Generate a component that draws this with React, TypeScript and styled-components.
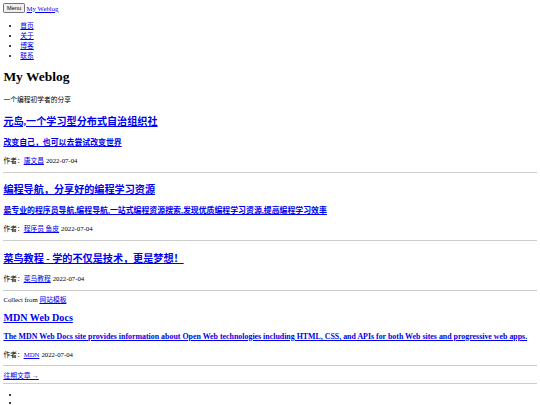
import React from 'react'
import styled, { createGlobalStyle } from 'styled-components'

// page was captured at 1280px wide and shrunk to 540, so every default size is scaled by 0.421875
const GlobalStyle = createGlobalStyle`
  html {
    background: #fff;
  }
  body {
    margin: 3.375px;
    font-family: "Liberation Serif", "Noto Sans CJK SC", serif;
    font-size: 6.75px;
    color: #000;
  }
`

const Link = styled.a`
  color: #0000ee;
  text-decoration: underline;
  text-underline-offset: 0.6px;
  text-decoration-thickness: 0.5px;
`

const TopBar = styled.div`
  display: flex;
  align-items: center;
  gap: 2px;
`

const MenuButton = styled.button`
  font-family: "Liberation Sans", Arial, sans-serif;
  font-size: 5.625px;
  padding: 0.8px 2.6px;
  margin: 0;
  border: 0.8px solid #767676;
  border-radius: 1.2px;
  background: #efefef;
  color: #000;
  line-height: 1.15;
`

const List = styled.ul`
  margin: 6.75px 0;
  padding-left: 16.875px;
`

const Item = styled.li`
  min-height: 7.8px;
`

const SiteTitle = styled.h1`
  font-size: 13.5px;
  margin: 9.05px 0;
`

const Para = styled.p`
  margin: 6.75px 0;
`

const Line = styled.div`
  margin: 0;
`

const PostTitle = styled.h2`
  font-size: 10.125px;
  margin: 8.4px 0;
`

const PostDesc = styled.h3`
  font-size: 7.9px;
  margin: 7.9px 0;
`

const Meta = styled.p`
  margin: 6.75px 0;
  display: flex;
  gap: 2px;
  align-items: baseline;
`

const Rule = styled.hr`
  margin: 3.375px 0;
  border: 0;
  border-top: 1px solid #cdcdcd;
  height: 0;
`

interface Post {
  title: string
  desc?: string
  author: string
  date: string
}

const posts: Post[] = [
  { title: '元岛,一个学习型分布式自治组织社', desc: '改变自己，也可以去尝试改变世界', author: '唐文昌', date: '2022-07-04' },
  { title: '编程导航，分享好的编程学习资源', desc: '最专业的程序员导航,编程导航,一站式编程资源搜索,发现优质编程学习资源,提高编程学习效率', author: '程序员 鱼皮', date: '2022-07-04' },
  { title: '菜鸟教程 - 学的不仅是技术，更是梦想！', author: '菜鸟教程', date: '2022-07-04' },
]

const collected: Post = {
  title: 'MDN Web Docs',
  desc: 'The MDN Web Docs site provides information about Open Web technologies including HTML, CSS, and APIs for both Web sites and progressive web apps.',
  author: 'MDN',
  date: '2022-07-04',
}

const PostBlock: React.FC<{ post: Post }> = ({ post }) => (
  <article>
    <PostTitle><Link href="#">{post.title}</Link></PostTitle>
    {post.desc && <PostDesc><Link href="#">{post.desc}</Link></PostDesc>}
    <Meta>
      <span>作者：<Link href="#">{post.author}</Link></span>
      <span>{post.date}</span>
    </Meta>
    <Rule />
  </article>
)

const App: React.FC = () => (
  <>
    <GlobalStyle />
    <header>
      <TopBar>
        <MenuButton>Menu</MenuButton>
        <Link href="#">My Weblog</Link>
      </TopBar>
      <nav>
        <List>
          {['首页', '关于', '博客', '联系'].map(it => (
            <Item key={it}><Link href="#">{it}</Link></Item>
          ))}
        </List>
      </nav>
    </header>
    <main>
      <SiteTitle>My Weblog</SiteTitle>
      <Para>一个编程初学者的分享</Para>
      {posts.map(it => <PostBlock key={it.title} post={it} />)}
      <Line>Collect from <Link href="#">网站模板</Link></Line>
      <PostBlock post={collected} />
      <Line><Link href="#">往期文章 →</Link></Line>
      <Rule />
    </main>
    <footer>
      <List>
        <Item />
        <Item />
      </List>
    </footer>
  </>
)

export default App
